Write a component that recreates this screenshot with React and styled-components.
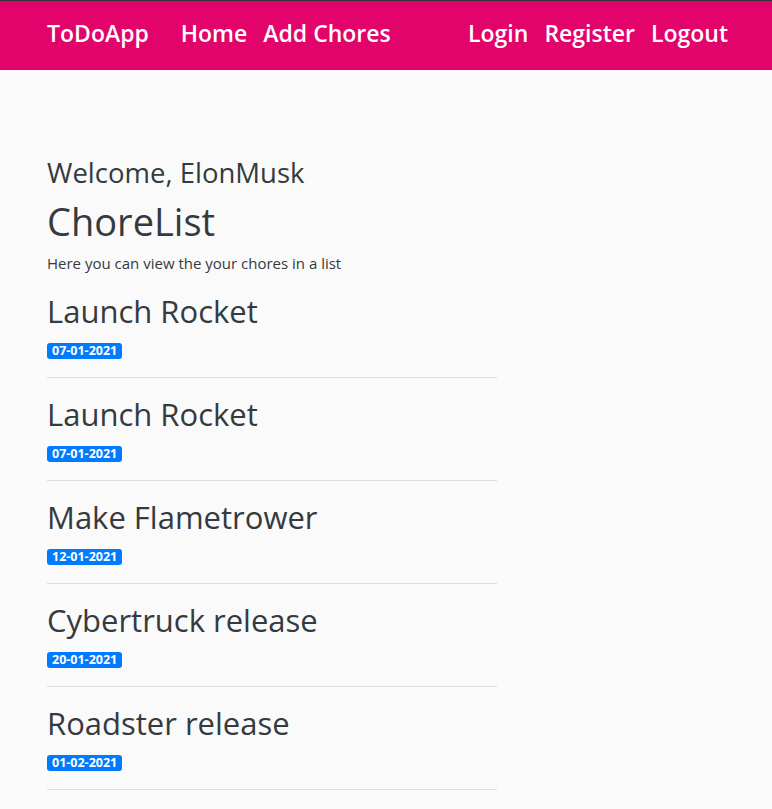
import React from 'react';
import styled, { createGlobalStyle } from 'styled-components';

const GlobalStyle = createGlobalStyle`
  html, body {
    margin: 0;
    padding: 0;
    background: #fafafa;
    font-family: "Open Sans", "Noto Sans", sans-serif;
    color: #343a40;
  }
`;

const Nav = styled.nav`
  display: flex;
  align-items: center;
  box-sizing: border-box;
  height: 70px;
  padding: 0 44px 6px 47px;
  background: #e2036b;
  border-top: 1px solid #333;
`;

const Brand = styled.a`
  color: #fff;
  font-size: 23px;
  font-weight: 600;
  margin-right: 32px;
`;

const NavGroup = styled.div`
  display: flex;
  gap: 16px;
  margin-left: ${({ $right }) => ($right ? 'auto' : '0')};
`;

const NavLink = styled.a`
  color: #fff;
  font-size: 23px;
  font-weight: 600;
`;

const Main = styled.main`
  padding: 86px 47px 0;
`;

const Welcome = styled.h3`
  margin: 0 0 10px;
  font-size: 27.5px;
  font-weight: 500;
  line-height: 1.2;
`;

const Title = styled.h1`
  margin: 0 0 8px;
  font-size: 38px;
  font-weight: 500;
  line-height: 1.2;
`;

const Lead = styled.p`
  margin: 0 0 19px;
  font-size: 15px;
`;

const List = styled.ul`
  list-style: none;
  margin: 0;
  padding: 0;
  width: 450px;
`;

const Item = styled.li`
  display: flex;
  flex-direction: column;
  align-items: flex-start;
  padding: 0 0 18px;
  margin-bottom: 17px;
  border-bottom: 1px solid #dddddd;
`;

const ChoreName = styled.h2`
  margin: 0 0 13px;
  font-size: 31px;
  font-weight: 500;
  line-height: 38px;
`;

const Badge = styled.span`
  height: 16px;
  padding: 0 5px;
  border-radius: 3px;
  background: #007bff;
  color: #fff;
  font-size: 12.5px;
  font-weight: 700;
  line-height: 16px;
`;

const chores = [
  { name: 'Launch Rocket', date: '07-01-2021' },
  { name: 'Launch Rocket', date: '07-01-2021' },
  { name: 'Make Flametrower', date: '12-01-2021' },
  { name: 'Cybertruck release', date: '20-01-2021' },
  { name: 'Roadster release', date: '01-02-2021' }
];

const App = () => (
  <>
    <GlobalStyle />
    <Nav>
      <Brand>ToDoApp</Brand>
      <NavGroup>
        <NavLink>Home</NavLink>
        <NavLink>Add Chores</NavLink>
      </NavGroup>
      <NavGroup $right>
        <NavLink>Login</NavLink>
        <NavLink>Register</NavLink>
        <NavLink>Logout</NavLink>
      </NavGroup>
    </Nav>
    <Main>
      <Welcome>Welcome, ElonMusk</Welcome>
      <Title>ChoreList</Title>
      <Lead>Here you can view the your chores in a list</Lead>
      <List>
        {chores.map((c, i) => (
          <Item key={i}>
            <ChoreName>{c.name}</ChoreName>
            <Badge>{c.date}</Badge>
          </Item>
        ))}
      </List>
    </Main>
  </>
);

export default App;
